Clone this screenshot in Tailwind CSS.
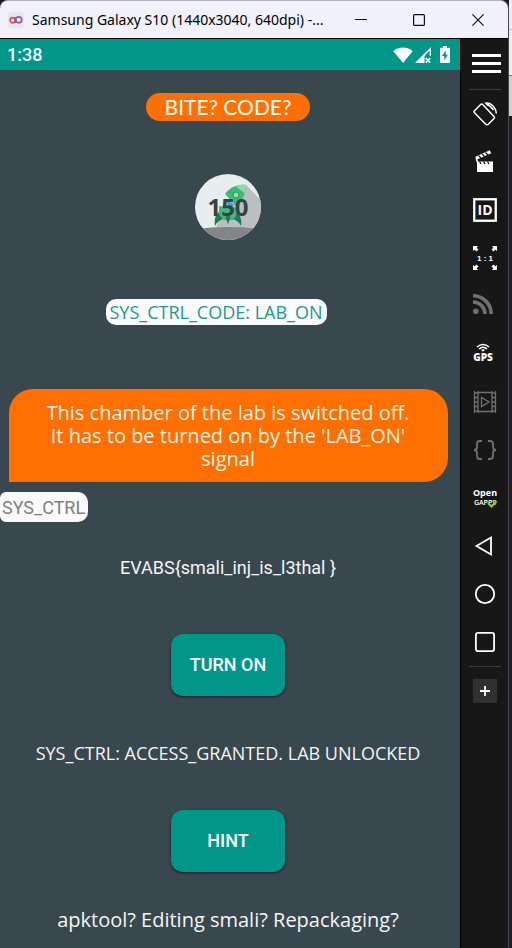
<!DOCTYPE html>
<html lang="en">
<head>
<meta charset="utf-8">
<meta name="viewport" content="width=device-width, initial-scale=1">
<title>Samsung Galaxy S10 (1440x3040, 640dpi)</title>
<script src="https://cdn.jsdelivr.net/npm/@tailwindcss/browser@4"></script>
</head>
<body class="flex min-h-screen bg-[#1c1a2b]">
<div class="flex min-w-0 grow flex-col rounded-t-lg border-r border-[#4a4a4c] bg-[#171717]">
  <header class="flex h-[39px] items-center rounded-t-lg border-t border-b border-t-[#b5b5b8] border-b-black bg-[#f1f2f9] pl-2">
    <svg class="size-4 shrink-0" viewBox="0 0 16 16" fill="none" stroke-width="1.7" aria-hidden="true">
      <rect width="16" height="16" rx="4" fill="#e9e6e7"/>
      <circle cx="4.7" cy="8.2" r="2.6" stroke="#d8527c"/>
      <path d="M7.3 5.2v5.8" stroke="#b34b86"/>
      <circle cx="10.7" cy="7.8" r="3" stroke="#7d64a8"/>
    </svg>
    <h1 class="ml-2 min-w-0 grow whitespace-nowrap font-['Noto_Sans',sans-serif] text-sm text-black">Samsung Galaxy S10 (1440x3040, 640dpi) -...</h1>
    <div class="flex shrink-0">
      <button class="flex h-9 w-[58px] items-center justify-center" aria-label="Minimize"><svg class="size-3" viewBox="0 0 12 12" stroke="#111"><path d="M0 5.5h12"/></svg></button>
      <button class="flex h-9 w-[58px] items-center justify-center" aria-label="Maximize"><svg class="size-3" viewBox="0 0 12 12" fill="none" stroke="#111" stroke-width="1.2"><rect x=".6" y=".6" width="10.8" height="10.8" rx="1"/></svg></button>
      <button class="flex h-9 w-[60px] items-center justify-center" aria-label="Close"><svg class="size-3" viewBox="0 0 12 12" stroke="#111" stroke-width="1.2"><path d="M.4.4l11.2 11.2M11.6.4.4 11.6"/></svg></button>
    </div>
  </header>

  <div class="flex grow">
    <main class="flex min-w-0 grow flex-col border-r border-black bg-[#39474e] text-[#f4f5f5]">
      <div class="flex h-[31px] items-center justify-between bg-[#009788] pr-[10px] pl-[7px] text-white">
        <time class="font-[Roboto,sans-serif] text-lg font-medium">1:38</time>
        <div class="flex items-center">
          <svg class="h-4 w-5" viewBox="0 0 20 16" fill="currentColor" aria-label="Wi-Fi"><path d="M10 16 .4 4.2C5.7-.6 14.3-.6 19.6 4.2z"/></svg>
          <svg class="ml-[2px] size-4" viewBox="0 0 16 16" aria-label="No signal"><path d="M0 16 16 0v9H9.500v7z" fill="#fff"/><path d="M10 8.200 14.700 3.500V9H10z" fill="#009788"/><path d="m10.800 11.200 4.400 4.400m0-4.400-4.400 4.400" stroke="#fff" stroke-width="1.700"/></svg>
          <svg class="ml-[9px] h-[17px] w-[10px]" viewBox="0 0 10 17" aria-label="Charging"><path d="M3 0h4v1.700h2q1 0 1 1V16q0 1-1 1H1q-1 0-1-1V2.700q0-1 1-1h2z" fill="#fff"/><path d="M5.700 4.500 2 10h2.300v4.300L8 8.800H5.700z" fill="#009788"/></svg>
        </div>
      </div>

      <div class="flex flex-col items-center pt-[23px] pr-1 text-center font-['Open_Sans',sans-serif]">
        <h2 class="h-7 w-[164px] rounded-full bg-[#ff7000] font-[Lato,sans-serif] text-[21px] leading-7 text-white">BITE? CODE?</h2>

        <div class="relative mt-[53px] flex size-[66px] items-center justify-center">
          <svg class="absolute inset-0 size-full" viewBox="0 0 66 66" aria-hidden="true">
            <defs><clipPath id="disc"><circle cx="33" cy="33" r="33"/></clipPath></defs>
            <g clip-path="url(#disc)">
              <rect width="66" height="66" fill="#e8eeed"/>
              <path d="M51 11 66 26v30H20l4-10 14-18z" fill="#bbbfc0"/>
              <path d="M0 55q33-4 66 0v11H0z" fill="#838589"/>
              <path d="M25 37c-5 4-6 9-5 15 2-4 5-6 8-7zM40 37c6 4 7 9 6 15-2-4-5-6-8-7z" fill="#207a57"/>
              <path d="M24 32c4 1 14 0 18 2l-1 8-3 4H28l-4-6z" fill="#3eb97c"/>
              <path d="M31 41h4v4l-2 5-2-5z" fill="#207a57"/>
              <path d="M51 11c-9-1-17 3-21 9l11 12c6-5 10-12 10-21z" fill="#3eb97c"/>
              <path d="M51 11c-4-.4-7 0-10 1.500l9 7z" fill="#92d8ac"/>
              <circle cx="41" cy="21" r="3" fill="#a8d69c" stroke="#249365"/>
              <path d="m30 28 4-2 5 5-3 3z" fill="#4b9bd1"/>
            </g>
          </svg>
          <span class="relative text-2xl leading-7 font-bold text-[#35443f]">150</span>
        </div>

        <p class="mt-[59px] mr-6 h-[26px] w-[221px] rounded-[10px] bg-[#fafafa] text-lg leading-[26px] text-[#1a9b8e]">SYS_CTRL_CODE: LAB_ON</p>

        <p class="mt-16 w-[439px] rounded-3xl rounded-bl-none bg-[#ff7000] py-3 text-xl leading-[23px] text-[#fdf3ea]">This chamber of the lab is switched off.<br>It has to be turned on by the 'LAB_ON'<br>signal</p>

        <label for="signal" class="sr-only">Signal</label>
        <input id="signal" type="text" placeholder="SYS_CTRL" class="mt-[10px] h-[30px] w-[88px] self-start rounded-r-[10px] rounded-l-md bg-[#fafafa] pl-[2px] font-[Roboto,sans-serif] text-lg text-[#333] placeholder:text-[#808080]">

        <p class="mt-[34px] font-[Roboto,sans-serif] text-lg leading-6">EVABS{smali_inj_is_l3thal }</p>
        <button class="mt-[54px] h-[62px] w-[114px] rounded-xl bg-[#009788] font-[Roboto,sans-serif] text-lg font-medium text-white shadow-sm shadow-black/50">TURN ON</button>
        <p class="mt-[45px] text-lg leading-6">SYS_CTRL: ACCESS_GRANTED. LAB UNLOCKED</p>
        <button class="mt-[45px] h-[62px] w-[114px] rounded-xl bg-[#009788] font-[Roboto,sans-serif] text-lg font-medium text-white shadow-sm shadow-black/50">HINT</button>
        <p class="mt-9 text-xl leading-6">apktool? Editing smali? Repackaging?</p>
      </div>
    </main>

    <nav class="flex w-[47px] shrink-0 flex-col items-center text-white" aria-label="Emulator tools">
      <button class="flex h-[50px] w-full items-center justify-center pl-1" aria-label="Menu"><svg class="h-5 w-[29px]" viewBox="0 0 29 20" fill="currentColor"><path d="M0 0h29v3H0zM0 8h29v3H0zM0 16h29v3H0z"/></svg></button>
      <hr class="w-8 border-[#3a3a3a]">
      <button class="flex h-12 w-full items-center justify-center" aria-label="Rotate"><svg class="size-6" viewBox="0 0 24 24" fill="none" stroke="currentColor" stroke-width="1.500"><path d="M7.700 2.500 1.500 8.700q-1 1 0 2L12.500 22q1.500 1.500 3 0l5.500-5.500q1-1 0-2L9.700 2.500q-1-1-2 0z"/><path d="M13 1c5.500-.3 10 4.700 10.300 10.500"/><path d="m11 .5 6.500.5-3 3z" fill="currentColor" stroke="none"/><path d="M14 2.500q4 1.500 6.500 5.500"/></svg></button>
      <button class="flex h-12 w-full items-center justify-center" aria-label="Record"><svg class="size-6" viewBox="0 0 24 24"><path d="M4 11.500h16V22H4z" fill="#fff"/><path d="M3.500 8 17.500 1.800" stroke="#fff" stroke-width="3.200"/><path d="m5.500 5.500 2.500 2.500M9 4l2.500 2.500M12.500 2.500 15 5" stroke="#171717" stroke-width="1.200"/><path d="m3 7 1.500 5.500" stroke="#fff" stroke-width="1.500"/><path d="m6.500 11.500 1.500 2.500M10.500 11.500 12 14M14.500 11.500 16 14" stroke="#171717" stroke-width="1.300"/></svg></button>
      <button class="flex h-12 w-full items-center justify-center" aria-label="Identifiers"><svg class="size-6" viewBox="0 0 24 24"><rect x="1.250" y="1.250" width="21.500" height="21.500" fill="none" stroke="#fff" stroke-width="2.300"/><text x="12" y="17" text-anchor="middle" font-family="Open Sans, sans-serif" font-weight="700" font-size="14" fill="#fff">ID</text></svg></button>
      <button class="flex h-12 w-full items-center justify-center" aria-label="Pixel perfect"><svg class="size-6" viewBox="0 0 24 24" fill="currentColor"><path id="corner" d="M0 0h5L3.700 1.700 5.500 3.500 3.500 5.500 1.700 3.700 0 5z"/><use href="#corner" transform="matrix(-1 0 0 1 24 0)"/><use href="#corner" transform="matrix(1 0 0 -1 0 24)"/><use href="#corner" transform="matrix(-1 0 0 -1 24 24)"/><text x="12" y="15" text-anchor="middle" font-family="Liberation Sans, sans-serif" font-weight="700" font-size="8">1 : 1</text></svg></button>
      <button class="flex h-12 w-full items-center justify-center text-[#707070]" aria-label="Network"><svg class="size-6" viewBox="0 0 24 24" fill="none" stroke="currentColor" stroke-width="3.600"><circle cx="2.800" cy="17.200" r="2.800" fill="currentColor" stroke="none"/><path d="M0 8a12 12 0 0 1 12 12M0 1.800A18.200 18.200 0 0 1 18.200 20"/></svg></button>
      <button class="flex h-12 w-full items-center justify-center" aria-label="GPS"><svg class="size-6 overflow-visible" viewBox="0 0 24 24" fill="none" stroke="currentColor" stroke-width="1.600"><path d="M4 5q6-5 12 0M6 7q4-3.500 8 0"/><path d="m10 9.700-2-2q2-1 4 0z" fill="currentColor" stroke="none"/><text x="10" y="19" text-anchor="middle" font-family="Open Sans, sans-serif" font-weight="800" font-size="10" fill="currentColor" stroke="none">GPS</text></svg></button>
      <button class="flex h-12 w-full items-center justify-center text-[#707070]" aria-label="Screencast"><svg class="size-6" viewBox="0 0 24 24" fill="none" stroke="currentColor" stroke-width="1.300"><path d="M1.500 1v22M5 1v22M19 1v22M22.500 1v22M5 2.500h14M5 21.500h14"/><path d="M1.500 3H5M1.500 7.500H5M1.500 12H5M1.500 16.500H5M1.500 21H5M19 3h3.500M19 7.500h3.500M19 12h3.500M19 16.500h3.500M19 21h3.500M8.500 7.500v9l7.500-4.500z"/></svg></button>
      <button class="flex h-12 w-full items-center justify-center text-[#707070]" aria-label="Code"><svg class="size-6" viewBox="0 0 24 24" fill="none" stroke="currentColor" stroke-width="1.800"><path d="M9 3H7Q4 3 4 6v3q0 3-3 3 3 0 3 3v3q0 3 3 3h2M15 3h2q3 0 3 3v3q0 3 3 3-3 0-3 3v3q0 3-3 3h-2"/></svg></button>
      <button class="flex h-12 w-full items-center justify-center" aria-label="Open GApps"><svg class="size-6 overflow-visible" viewBox="0 0 24 24" fill="currentColor"><text x="12" y="10" text-anchor="middle" font-family="Open Sans, sans-serif" font-weight="700" font-size="9">Open</text><text x="12" y="19" text-anchor="middle" font-family="Open Sans, sans-serif" font-weight="600" font-size="7">GAPPS</text><path d="m15 17 3.500 3.500 5-5.500" fill="none" stroke="#9fc51b" stroke-width="2.200"/></svg></button>
      <button class="flex h-12 w-full items-center justify-center" aria-label="Back"><svg class="size-6" viewBox="0 0 24 24" fill="none" stroke="currentColor" stroke-width="1.800"><path d="M18 3.500v17L3.500 12z"/></svg></button>
      <button class="flex h-12 w-full items-center justify-center" aria-label="Home"><svg class="size-6" viewBox="0 0 24 24" fill="none" stroke="currentColor" stroke-width="1.800"><circle cx="12" cy="12" r="9.200"/></svg></button>
      <button class="flex h-12 w-full items-center justify-center" aria-label="Recent apps"><svg class="size-6" viewBox="0 0 24 24" fill="none" stroke="currentColor" stroke-width="1.800"><rect x="2.900" y="2.900" width="18.200" height="18.200" rx="2"/></svg></button>
      <hr class="w-8 border-[#3a3a3a]">
      <div class="flex h-12 items-center"><button class="flex size-6 items-center justify-center bg-[#303030]" aria-label="More"><svg class="size-[10px]" viewBox="0 0 10 10" stroke="currentColor" stroke-width="1.800"><path d="M0 5h10M5 0v10"/></svg></button></div>
    </nav>
  </div>
</div>
<div class="flex w-[3px] shrink-0 flex-col" aria-hidden="true">
  <div class="h-[30px] border-b border-[#c0c0c0] bg-[#ededed]"></div>
  <div class="h-[46px] border-b border-[#777] bg-[#ededed]"></div>
  <div class="h-10 bg-[#d5cfd0]"></div>
</div>
</body>
</html>
